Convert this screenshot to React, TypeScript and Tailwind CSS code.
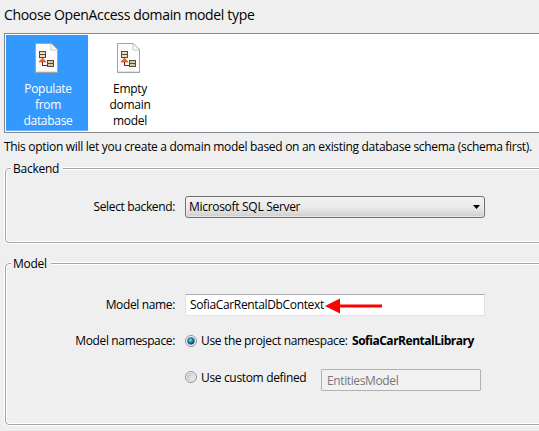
import type { ReactNode } from "react";

function ModelIcon() {
  return (
    <svg width="23" height="31" viewBox="0 0 23 31" shapeRendering="crispEdges" className="mr-px block">
      <path d="M.5 .5H16L22.5 7V29.5H.5Z" fill="#fcfcfc" stroke="#a5a5a5" />
      <path d="M1 28.5H22" stroke="#e4e4e4" />
      <path d="M16 .5V7H22.5" fill="#fff" stroke="#c4c4c4" shapeRendering="auto" />
      <path d="M4.5 8.5H10.5V14.5H4.5Z" fill="#f5dcac" stroke="#4e4b46" />
      <path d="M4 11.5H11" stroke="#4e4b46" />
      <path d="M12.5 17.5H18.5V23.5H12.5Z" fill="#dcc69b" stroke="#4e4b46" />
      <path d="M12 20.5H19" stroke="#4e4b46" />
      <path d="M7.5 17V22.5H12" fill="none" stroke="#8d1b13" />
      <path d="M7.5 15L11 19H4Z" fill="#f26a2e" stroke="#c4321a" strokeWidth=".6" shapeRendering="auto" />
    </svg>
  );
}

function Option({ lines, selected = false }: { lines: string[]; selected?: boolean }) {
  return (
    <div
      className={
        selected
          ? "flex h-24 w-[82px] flex-col items-center border-b border-[#66b2ff] bg-[#3399ff] pt-2 text-white"
          : "flex h-24 w-[82px] flex-col items-center pt-2"
      }
    >
      <ModelIcon />
      <div className="ml-[2px] mt-[7px] flex flex-col items-center leading-4 tracking-[-0.3px]">
        {lines.map((line) => (
          <span key={line}>{line}</span>
        ))}
      </div>
    </div>
  );
}

function Group({ title, className, children }: { title: string; className: string; children: ReactNode }) {
  return (
    <section className={className}>
      <h2 className="relative z-10 -mt-2 ml-[5px] w-fit bg-[#efefef] pl-[2px] pr-1 text-[12px] leading-4 tracking-[-0.25px]">
        {title}
      </h2>
      {children}
    </section>
  );
}

function Radio({ checked = false }: { checked?: boolean }) {
  return (
    <svg width="12" height="12" viewBox="0 0 12 12" className="shrink-0">
      <defs>
        <radialGradient id="dot" cx=".4" cy=".35" r=".65">
          <stop offset="0" stopColor="#8be2fb" />
          <stop offset=".5" stopColor="#1b8fc0" />
          <stop offset="1" stopColor="#0b4265" />
        </radialGradient>
        <linearGradient id="well" x1="0" y1="0" x2="1" y2="1">
          <stop offset="0" stopColor="#bcc0c6" />
          <stop offset="1" stopColor="#f8f8f8" />
        </linearGradient>
      </defs>
      <circle cx="6" cy="6" r="5.5" fill="#f6f6f6" stroke="#8e8f8f" />
      <circle cx="6" cy="6" r="3.8" fill="url(#well)" stroke="#bfc2c5" strokeWidth=".6" />
      {checked && <circle cx="6" cy="6" r="3.3" fill="url(#dot)" stroke="#173e5a" strokeWidth=".6" />}
    </svg>
  );
}

const box =
  "h-[75px] w-[560px] shrink-0 rounded-[4px] border border-[#a5a5a5] shadow-[inset_0_0_0_1px_#fff,0_0_0_1px_#fff]";
const tallBox =
  "h-[162px] w-[560px] shrink-0 rounded-[4px] border border-[#a5a5a5] shadow-[inset_0_0_0_1px_#fff,0_0_0_1px_#fff]";
const label = "w-[169px] shrink-0 text-right tracking-[-0.36px]";

export default function App() {
  return (
    <main className="flex h-[431px] w-[539px] flex-col overflow-hidden whitespace-nowrap bg-[#efefef] font-['Open_Sans','Noto_Sans',sans-serif] text-[12px] leading-4 text-black">
      <h1 className="ml-1 mt-[5px] h-7 text-[14px] leading-5 tracking-[-0.34px]">Choose OpenAccess domain model type</h1>
      <div className="ml-1 flex h-[100px] w-[560px] shrink-0 border border-[#828790] bg-white pl-px pt-px">
        <Option selected lines={["Populate", "from", "database"]} />
        <Option lines={["Empty", "domain", "model"]} />
      </div>
      <p className="ml-1 mt-[6px] h-[29px] shrink-0 tracking-[-0.3px]">
        This option will let you create a domain model based on an existing database schema (schema first).
      </p>
      <div className="ml-[5px] flex flex-col gap-5">
        <Group title="Backend" className={box}>
          <div className="mt-[19px] flex items-center">
            <span className={label}>Select backend:</span>
            <div className="ml-[10px] flex h-[22px] w-[300px] items-center justify-between rounded-[3px] border border-[#707070] bg-linear-to-b from-[#f2f2f2] from-0% via-[#ebebeb] via-50% to-[#cfcfcf] pl-[3px] pr-1 shadow-[inset_0_0_0_1px_#fafafa80]">
              <span className="tracking-[-0.3px]">Microsoft SQL Server</span>
              <svg width="7" height="4" viewBox="0 0 7 4">
                <path d="M0 0H7L3.5 4Z" />
              </svg>
            </div>
          </div>
        </Group>
        <Group title="Model" className={tallBox}>
          <div className="mt-[22px] flex items-center">
            <span className={label}>Model name:</span>
            <div className="ml-[10px] flex h-[22px] w-[300px] items-center border border-[#e2e3ea] border-t-[#abadb3] bg-white pl-1">
              <span className="w-[134px] tracking-[-0.35px]">SofiaCarRentalDbContext</span>
              <svg width="57" height="16" viewBox="0 0 57 16" className="ml-px mt-[2px]">
                <path d="M0 8L15 .5V6.5H57V9.5H15V15.5Z" fill="#fe0000" />
              </svg>
            </div>
          </div>
          <div className="mt-[17px] flex h-4 items-center">
            <span className={label}>Model namespace:</span>
            <span className="ml-[10px] flex">
              <Radio checked />
            </span>
            <span className="ml-1 w-[151px] tracking-[-0.34px]">Use the project namespace:</span>
            <strong className="font-bold tracking-[-0.48px]">SofiaCarRentalLibrary</strong>
          </div>
          <div className="ml-[179px] mt-[20px] flex h-[22px]">
            <span className="mt-[2px] h-3">
              <Radio />
            </span>
            <span className="ml-1 mt-px w-[120px] tracking-[-0.34px]">Use custom defined</span>
            <div className="flex h-[22px] w-[160px] items-center rounded-[1px] border border-[#afb2b5] bg-[#f1f1f1] pl-[5px] pt-[2px] tracking-[-0.38px] text-[#777]">
              EntitiesModel
            </div>
          </div>
        </Group>
      </div>
    </main>
  );
}
